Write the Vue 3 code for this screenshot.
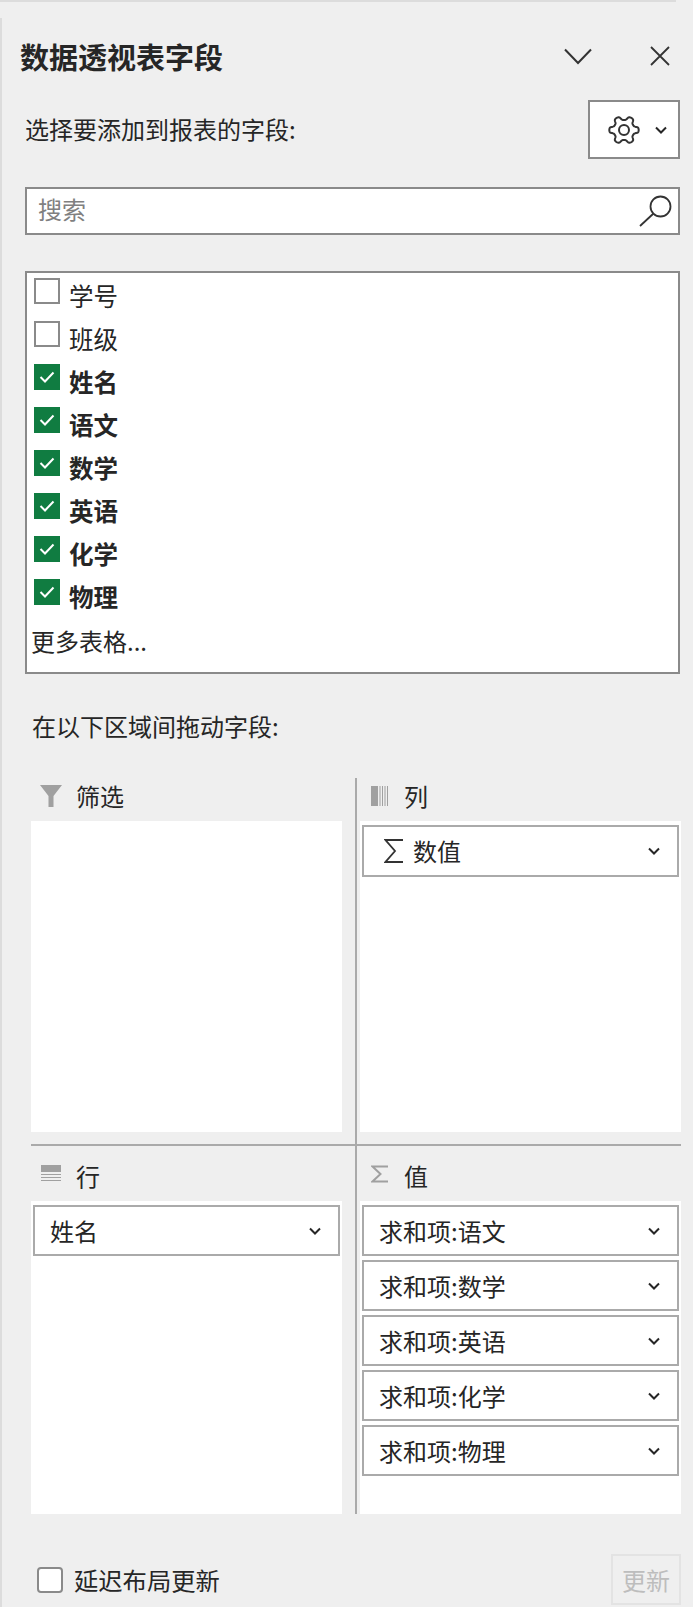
<script setup>
const fields = [
  { name: '学号', on: false },
  { name: '班级', on: false },
  { name: '姓名', on: true },
  { name: '语文', on: true },
  { name: '数学', on: true },
  { name: '英语', on: true },
  { name: '化学', on: true },
  { name: '物理', on: true },
]
const values = ['求和项:语文', '求和项:数学', '求和项:英语', '求和项:化学', '求和项:物理']

const gearPath = (() => {
  const pts = []
  for (let i = 0; i < 144; i++) {
    const t = (i / 144) * Math.PI * 2
    const r = 12.6 + 2.2 * Math.tanh(1.8 * Math.cos(6 * t))
    pts.push(`${(16 + r * Math.cos(t)).toFixed(2)} ${(15 + 0.95 * r * Math.sin(t)).toFixed(2)}`)
  }
  return 'M' + pts.join('L') + 'Z'
})()
</script>

<template>
  <div class="page">
    <div class="top-rule"></div>
    <section class="pane">
      <header class="title-row">
        <h1 class="title">数据透视表字段</h1>
        <svg class="title-chevron" width="28" height="17" viewBox="0 0 28 17"><path d="M1 1.5 14 15 27 1.5" /></svg>
        <svg class="title-close" width="20" height="20" viewBox="0 0 20 20"><path d="M1 1 19 19M19 1 1 19" /></svg>
      </header>

      <div class="choose-row">
        <span class="choose-label">选择要添加到报表的字段:</span>
        <button class="gear-btn" type="button">
          <svg class="gear" width="32" height="30" viewBox="0 0 32 30"><path :d="gearPath" /><circle cx="16" cy="15" r="5" /></svg>
          <svg class="chev" width="12" height="8" viewBox="0 0 12 8"><path d="M1 1.5 6 6.5 11 1.5" /></svg>
        </button>
      </div>

      <div class="search">
        <span class="search-hint">搜索</span>
        <svg class="search-icon" width="34" height="32" viewBox="0 0 34 32"><circle cx="22.5" cy="11.5" r="10" /><path d="M15.5 18.5 2 31" /></svg>
      </div>

      <div class="field-list">
        <label v-for="f in fields" :key="f.name" class="field" :class="{ on: f.on }">
          <span class="box">
            <svg v-if="f.on" width="16" height="12" viewBox="0 0 16 12"><path d="M1.5 6 6 10.5 14.5 1.5" /></svg>
          </span>
          <span>{{ f.name }}</span>
        </label>
        <div class="more">更多表格...</div>
      </div>

      <div class="drag-hint">在以下区域间拖动字段:</div>

      <div class="zones">
        <div class="zone top left">
          <div class="zone-head">
            <svg class="z-icon" width="22" height="22" viewBox="0 0 22 22"><path d="M0 0H22L13.5 11V22H8.500V11Z" fill="#a0a0a0" /></svg>
            <span>筛选</span>
          </div>
          <div class="zone-body"></div>
        </div>
        <div class="zone top right">
          <div class="zone-head">
            <svg class="z-icon" width="18" height="20" viewBox="0 0 18 20" fill="#a0a0a0"><rect x="0" width="7" height="20" /><rect x="8.500" width="1" height="20" /><rect x="11" width="1" height="20" /><rect x="13.500" width="1" height="20" /><rect x="16" width="1" height="20" /></svg>
            <span>列</span>
          </div>
          <div class="zone-body">
            <div class="pill tall">
              <svg class="sigma" width="20" height="24" viewBox="0 0 20 24"><path d="M19 1H1.500L11 12 1.500 23H19" /></svg>
              <span>数值</span>
              <svg class="chev end" width="12" height="8" viewBox="0 0 12 8"><path d="M1 1.500 6 6.500 11 1.500" /></svg>
            </div>
          </div>
        </div>
        <div class="zone bottom left">
          <div class="zone-head">
            <svg class="z-icon rows-icon" width="20" height="18" viewBox="0 0 20 18" fill="#a0a0a0"><rect width="20" height="7" /><rect y="9" width="20" height="1" /><rect y="12" width="20" height="1" /><rect y="15" width="20" height="1" /></svg>
            <span>行</span>
          </div>
          <div class="zone-body">
            <div class="pill">
              <span>姓名</span>
              <svg class="chev end" width="12" height="8" viewBox="0 0 12 8"><path d="M1 1.500 6 6.500 11 1.500" /></svg>
            </div>
          </div>
        </div>
        <div class="zone bottom right">
          <div class="zone-head">
            <svg class="z-icon sigma-grey" width="18" height="18" viewBox="0 0 18 18"><path d="M17 1.500H1.500L9.500 9 1.500 16.500H17" /></svg>
            <span>值</span>
          </div>
          <div class="zone-body">
            <div v-for="v in values" :key="v" class="pill">
              <span>{{ v }}</span>
              <svg class="chev end" width="12" height="8" viewBox="0 0 12 8"><path d="M1 1.500 6 6.500 11 1.500" /></svg>
            </div>
          </div>
        </div>
      </div>

      <footer class="foot">
        <label class="defer"><span class="defer-box"></span><span>延迟布局更新</span></label>
        <button class="update" type="button" disabled>更新</button>
      </footer>
    </section>
  </div>
</template>

<style>
html, body { margin: 0; background: #efefef; }
</style>

<style scoped>
.page {
  width: 693px;
  height: 1607px;
  overflow: hidden;
  background: #efefef;
  color: #262626;
  font-family: "Noto Sans CJK SC", "Noto Sans", sans-serif;
  font-size: 24px;
  line-height: 34px;
}
.top-rule {
  width: 676px;
  height: 2px;
  margin-bottom: 16px;
  background: #dcdcdc;
}
.pane {
  height: 1589px;
  padding-top: 18px;
  border-left: 2px solid #dcdcdc;
  box-sizing: border-box;
}
.title-row {
  display: flex;
  align-items: center;
  height: 40px;
  padding-left: 18px;
}
.title {
  margin: 0;
  font-size: 29px;
  font-weight: 700;
  line-height: 40px;
}
.title-chevron { margin-left: auto; fill: none; stroke: #333; stroke-width: 2; }
.title-close { margin-left: 58px; margin-right: 23px; fill: none; stroke: #333; stroke-width: 1.8; }
.choose-row {
  display: flex;
  align-items: center;
  justify-content: space-between;
  height: 59px;
  margin-top: 24px;
  padding-left: 23px;
  padding-right: 13px;
}
.choose-label { padding-bottom: 2px; }
.gear-btn {
  display: flex;
  align-items: center;
  width: 92px;
  height: 59px;
  padding: 0 0 0 18px;
  box-sizing: border-box;
  background: #fff;
  border: 2px solid #8a8a8a;
  border-radius: 0;
}
.gear { fill: none; stroke: #333; stroke-width: 2; stroke-linejoin: round; }
.chev { fill: none; stroke: #262626; stroke-width: 2; flex: none; }
.gear-btn .chev { margin-left: 15px; }
.search {
  display: flex;
  align-items: center;
  justify-content: space-between;
  height: 48px;
  margin: 28px 13px 0 23px;
  padding: 0 6px 0 11px;
  box-sizing: border-box;
  background: #fff;
  border: 2px solid #8a8a8a;
}
.search-hint { color: #808080; padding-bottom: 4px; }
.search-icon { fill: none; stroke: #333; stroke-width: 1.8; }
.field-list {
  height: 403px;
  margin: 36px 13px 0 23px;
  padding: 3px 0 0 7px;
  box-sizing: border-box;
  background: #fff;
  border: 2px solid #8a8a8a;
}
.field {
  display: flex;
  gap: 9px;
  height: 43px;
  font-size: 24.5px;
  line-height: 39px;
}
.field.on { font-weight: 700; }
.box {
  display: flex;
  align-items: center;
  justify-content: center;
  flex: none;
  width: 26px;
  height: 26px;
  margin-top: 2px;
  box-sizing: border-box;
  border: 2px solid #8a8a8a;
  background: #fff;
}
.field.on .box { background: #107c41; border-color: #107c41; }
.box svg { fill: none; stroke: #fff; stroke-width: 2; }
.more { line-height: 41px; margin-left: -3px; }
.drag-hint { margin: 35px 0 0 30px; height: 34px; }
.zones {
  display: grid;
  grid-template-columns: 324px 326px;
  grid-template-rows: 368px 368px;
  margin: 35px 0 0 29px;
}
.zone { display: flex; flex-direction: column; min-height: 0; }
.zone.top { padding-bottom: 12px; border-bottom: 2px solid #aaa; box-sizing: border-box; }
.zone.left { padding-right: 13px; }
.zone.right { border-left: 2px solid #aaa; padding-left: 3px; }
.zone-head { display: flex; align-items: center; flex: none; box-sizing: border-box; }
.zone.top .zone-head { height: 43px; padding-bottom: 8px; }
.zone.bottom .zone-head { height: 55px; }
.zone.bottom .zone-head span { margin-top: 4px; }
.zone.left .zone-head { padding-left: 9px; }
.zone.right .zone-head { padding-left: 11px; }
.zone.left .z-icon { margin-right: 14px; }
.zone.right .z-icon { margin-right: 15px; }
.zone.left .rows-icon { margin-right: 15px; margin-left: 1px; }
.sigma-grey { fill: none; stroke: #a0a0a0; stroke-width: 2; }
.zone-body {
  display: flex;
  flex-direction: column;
  gap: 4px;
  flex: 1;
  padding: 4px 2px 0 2px;
  background: #fff;
}
.pill {
  display: flex;
  align-items: center;
  flex: none;
  height: 51px;
  padding: 0 17px 0 15px;
  box-sizing: border-box;
  background: #fff;
  border: 2px solid #aaa;
}
.pill.tall { height: 52px; }
.sigma { fill: none; stroke: #333; stroke-width: 1.8; margin: 0 9px 0 5px; }
.chev.end { margin-left: auto; }
.foot {
  display: flex;
  align-items: center;
  justify-content: space-between;
  height: 51px;
  margin: 40px 12px 0 35px;
}
.defer { display: flex; align-items: center; gap: 11px; font-size: 24.3px; }
.defer-box {
  width: 26px;
  height: 26px;
  box-sizing: border-box;
  border: 2px solid #8a8a8a;
  border-radius: 4px;
  background: #fff;
}
.update {
  width: 70px;
  height: 51px;
  padding: 0;
  box-sizing: border-box;
  background: transparent;
  border: 2px solid #e3e3e3;
  color: #bdbdbd;
  font: inherit;
}
</style>
